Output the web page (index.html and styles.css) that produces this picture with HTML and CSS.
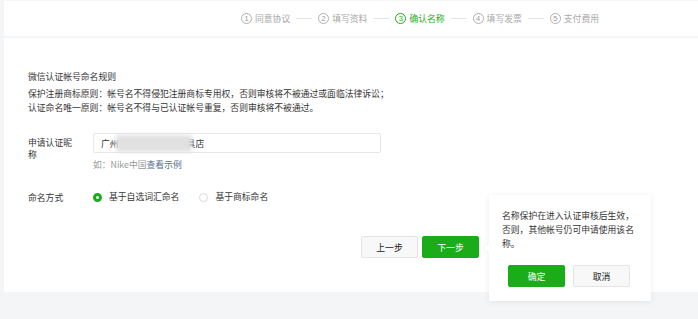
FILE: index.html
```html
<!DOCTYPE html>
<html lang="zh-CN">
<head>
  <meta charset="UTF-8">
  <title>微信认证 - 确认名称</title>
  <link rel="stylesheet" href="styles.css">
</head>
<body>
  <div class="steps-bar">
    <div class="steps">
      <div class="step"><span class="num">1</span>同意协议</div>
      <span class="step-line"></span>
      <div class="step"><span class="num">2</span>填写资料</div>
      <span class="step-line"></span>
      <div class="step active"><span class="num">3</span>确认名称</div>
      <span class="step-line"></span>
      <div class="step"><span class="num">4</span>填写发票</div>
      <span class="step-line"></span>
      <div class="step"><span class="num">5</span>支付费用</div>
    </div>
  </div>

  <div class="main">
    <div class="rules">
      <h3>微信认证帐号命名规则</h3>
      <p>保护注册商标原则：帐号名不得侵犯注册商标专用权，否则审核将不被通过或面临法律诉讼；</p>
      <p>认证命名唯一原则：帐号名不得与已认证帐号重复，否则审核将不被通过。</p>
    </div>

    <div class="form-row">
      <label class="form-label">申请认证昵称</label>
      <div class="form-field">
        <div class="input">广州<span class="masked"></span>具店</div>
        <div class="hint">如：Nike中国<a href="#">查看示例</a></div>
      </div>
    </div>

    <div class="form-row radio-row">
      <label class="form-label">命名方式</label>
      <div class="form-field radios">
        <span class="radio checked"><i></i>基于自选词汇命名</span>
        <span class="radio"><i></i>基于商标命名</span>
      </div>
    </div>

    <div class="actions">
      <button class="btn">上一步</button>
      <button class="btn btn-primary">下一步</button>
    </div>
  </div>

  <div class="popover">
    <p>名称保护在进入认证审核后生效，否则，其他帐号仍可申请使用该名称。</p>
    <div class="popover-actions">
      <button class="btn btn-primary">确定</button>
      <button class="btn">取消</button>
    </div>
  </div>
</body>
</html>
```

FILE: styles.css
```css
body {
  margin: 0;
  background: #f4f5f7;
  font-family: "Noto Sans CJK SC", "Liberation Sans", sans-serif;
  font-size: 8.8px;
  color: #353535;
  height: 319px;
  overflow: hidden;
  position: relative;
}
.steps-bar {
  background: #fff;
  margin: 1px 0 0 4px;
  height: 35px;
  display: flex;
  align-items: center;
}
.steps {
  display: flex;
  align-items: center;
  padding-left: 237px;
  color: #a8a8a8;
}
.step {
  display: flex;
  align-items: center;
  line-height: 12px;
}
.step .num {
  width: 9px;
  height: 9px;
  border: 1px solid #b0b0b0;
  border-radius: 50%;
  font-family: "Liberation Sans", sans-serif;
  font-size: 7.5px;
  line-height: 9px;
  text-align: center;
  margin-right: 3px;
  color: #999;
}
.step.active {
  color: #1aad19;
}
.step.active .num {
  border-color: #1aad19;
  color: #1aad19;
}
.step-line {
  width: 16px;
  height: 1px;
  background: #e4e4e4;
  margin: 0 6px;
}
.main {
  background: #fff;
  margin: 2px 0 0 4px;
  height: 254px;
  box-sizing: border-box;
  padding: 32px 0 0 24px;
}
.rules h3 {
  margin: 0 0 3px;
  font-size: 8.8px;
  font-weight: normal;
  line-height: 14px;
  color: #353535;
}
.rules p {
  margin: 0;
  line-height: 14px;
}
.form-row {
  display: flex;
  margin-top: 18px;
}
.form-label {
  width: 50px;
  padding-top: 4px;
  line-height: 12px;
  flex-shrink: 0;
}
.form-field {
  margin-left: 15px;
}
.input {
  width: 288px;
  height: 20px;
  box-sizing: border-box;
  border: 1px solid #e7e7eb;
  border-radius: 2px;
  padding-left: 7px;
  display: flex;
  align-items: center;
  color: #353535;
}
.masked {
  display: inline-block;
  width: 76px;
  height: 17px;
  background: #e0e0e0;
  filter: blur(2px);
  margin-left: -3px;
  margin-right: -5px;
  position: relative;
  z-index: 1;
}
.hint {
  margin-top: 6px;
  line-height: 12px;
  color: #9a9a9a;
}
.hint a {
  color: #576b95;
  text-decoration: none;
}
.radio-row {
  margin-top: 19px;
}
.radio-row .form-label {
  padding-top: 0;
  margin-top: 2px;
}
.radios {
  display: flex;
  line-height: 12px;
  margin-left: 15px;
}
.radio {
  display: flex;
  align-items: center;
  margin-right: 20px;
}
.radio i {
  width: 9px;
  height: 9px;
  box-sizing: border-box;
  border: 1px solid #d9dadc;
  border-radius: 50%;
  margin-right: 7px;
}
.radio.checked i {
  border: 3px solid #1aad19;
}
.actions {
  margin: 32px 0 0 333px;
  display: flex;
  gap: 4px;
}
.btn {
  width: 57px;
  height: 22px;
  box-sizing: border-box;
  border: 1px solid #e4e4e4;
  border-radius: 2px;
  background: #f8f8f8;
  color: #222;
  font-family: inherit;
  font-size: 8.8px;
  padding: 0;
}
.btn-primary {
  background: #1aad19;
  border-color: #1aad19;
  color: #fff;
}
.popover {
  position: absolute;
  left: 489px;
  top: 195px;
  width: 162px;
  height: 106px;
  box-sizing: border-box;
  background: #fff;
  box-shadow: 0 1px 6px rgba(0,0,0,0.08);
  padding: 14px 0 0 13px;
}
.popover::before {
  content: "";
  position: absolute;
  left: -5px;
  top: 48px;
  border-style: solid;
  border-width: 5px 5px 5px 0;
  border-color: transparent #fff transparent transparent;
  filter: drop-shadow(-1px 0 1px rgba(0,0,0,0.05));
}
.popover p {
  margin: 0;
  width: 134px;
  line-height: 14px;
}
.popover-actions {
  display: flex;
  gap: 8px;
  margin-top: 14px;
  margin-left: 6px;
}
```
